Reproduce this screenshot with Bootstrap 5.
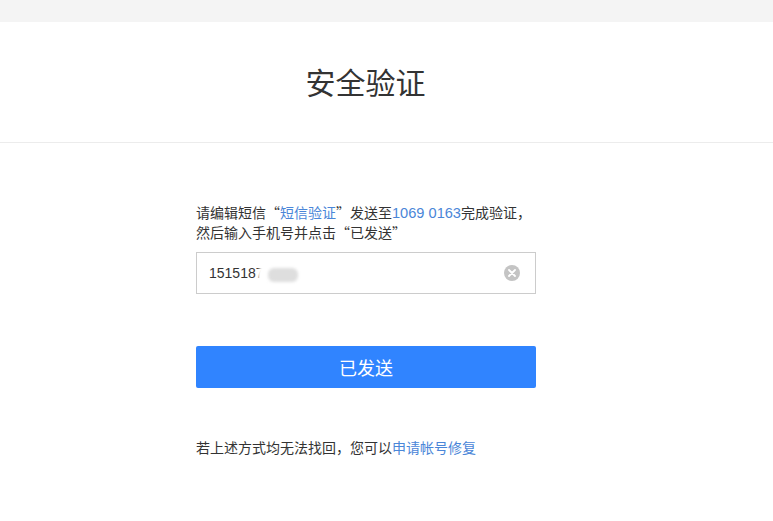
<!DOCTYPE html>
<html lang="zh">
<head>
<meta charset="utf-8">
<title>安全验证</title>
<link href="https://cdn.jsdelivr.net/npm/bootstrap@5.3.0/dist/css/bootstrap.min.css" rel="stylesheet">
<style>
html, body { height: 100%; }
body { background: #fff; color: #333; font-family: "Noto Sans CJK SC", "Liberation Sans", sans-serif; font-size: 14px; overflow: hidden; }
.top-strip { height: 22px; background: #f4f4f4; }
.title-band { height: 121px; border-bottom: 1px solid #ececec; padding: 0 42px 3px 0; }
.title-band h1 { font-size: 30px; font-weight: 400; line-height: 40px; margin: 0; color: #333; }
.page-body { padding: 59px 41px 0 0; }
.verify-box { width: 340px; }
.hint-text { font-size: 14px; line-height: 20px; margin: 0 0 10px; white-space: nowrap; }
.blue-link { color: #4a86d8; text-decoration: none; }
.num-link { font-family: "Liberation Sans", sans-serif; font-size: 14.6px; line-height: 1; }
.phone-field { height: 42px; border: 1px solid #ccc; padding: 0 15px 0 12px; }
.phone-value { font-family: "Liberation Sans", sans-serif; font-size: 14px; color: #333; }
.smudge { position: absolute; left: 61px; top: 9px; width: 44px; height: 21px; background: #fff; filter: blur(1px); border-radius: 10px 10px 10px 3px; transform: rotate(-4deg); }
.smudge-core { position: absolute; left: 71px; top: 15px; width: 30px; height: 14px; background: #dedede; filter: blur(1.5px); border-radius: 6px; }
.send-btn { height: 42px; margin-top: 52px; background: #3084ff; border: 0; border-radius: 2px; font-size: 18px; line-height: 42px; padding: 0; color: #fff; }
.send-btn:hover { background: #3084ff; color: #fff; }
.recover-text { margin: 49px 0 0; font-size: 14px; line-height: 20px; white-space: nowrap; }
</style>
</head>
<body>
<div class="top-strip"></div>
<div class="title-band d-flex align-items-center justify-content-center">
  <h1>安全验证</h1>
</div>
<div class="page-body">
<main class="verify-box mx-auto">
  <p class="hint-text">请编辑短信“<a class="blue-link" href="#">短信验证</a>”发送至<a class="blue-link num-link" href="#">1069 0163</a>完成验证，<br>然后输入手机号并点击“已发送”</p>
  <div class="phone-field position-relative d-flex align-items-center justify-content-between">
    <span class="phone-value">1515187</span>
    <span class="smudge"></span>
    <span class="smudge-core"></span>
    <svg width="16" height="16" viewBox="0 0 16 16" aria-hidden="true">
      <circle cx="8" cy="8" r="8" fill="#c4c4c4"/>
      <path d="M5 5l6 6M11 5l-6 6" stroke="#fff" stroke-width="1.8" stroke-linecap="round"/>
    </svg>
  </div>
  <button type="button" class="btn send-btn w-100 d-block">已发送</button>
  <p class="recover-text">若上述方式均无法找回，您可以<a class="blue-link" href="#">申请帐号修复</a></p>
</main>
</div>
<script src="https://cdn.jsdelivr.net/npm/bootstrap@5.3.0/dist/js/bootstrap.bundle.min.js"></script>
</body>
</html>
